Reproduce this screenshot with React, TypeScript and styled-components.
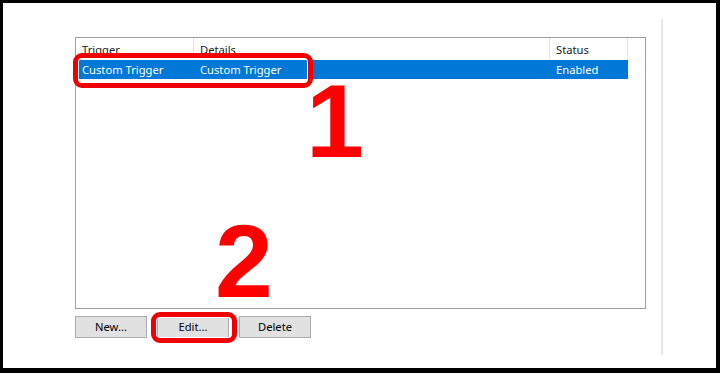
import React from "react";
import styled, { createGlobalStyle } from "styled-components";

const Global = createGlobalStyle`
  html, body { margin: 0; padding: 0; background: #000; }
  #root { width: 720px; height: 373px; }
  * { box-sizing: border-box; }
`;

const Frame = styled.div`
  position: relative;
  width: 720px;
  height: 373px;
  background: #fff;
  border-style: solid;
  border-color: #000;
  border-width: 3px 4px 5px 3px;
  display: flex;
  align-items: flex-start;
  font-family: "Noto Sans", "Open Sans", sans-serif;
  font-size: 11.2px;
  color: #000;
`;

const MainColumn = styled.div`
  margin: 34px 0 0 72px;
  width: 571px;
  display: flex;
  flex-direction: column;
`;

const RightRule = styled.div`
  margin: 16px 0 0 15px;
  width: 2px;
  height: 336px;
  background: #e6e6e6;
`;

const ListBox = styled.div`
  height: 272px;
  border: 1px solid #a0a0a0;
  background: #fff;
  display: flex;
  flex-direction: column;
`;

const Row = styled.div<{ $selected?: boolean; $header?: boolean }>`
  width: 552px;
  height: ${(p) => (p.$header ? "22px" : "19px")};
  display: grid;
  grid-template-columns: 118px 356px 78px;
  background: ${(p) => (p.$selected ? "#0078d7" : "transparent")};
  color: ${(p) => (p.$selected ? "#fff" : "#1a1a1a")};
`;

const Cell = styled.div<{ $header?: boolean }>`
  padding-left: 6px;
  display: flex;
  align-items: center;
  white-space: nowrap;
  line-height: 1;
  border-right: ${(p) => (p.$header ? "1px solid #e5e5e5" : "none")};
  padding-top: ${(p) => (p.$header ? "1px" : "0")};
`;

const ButtonRow = styled.div`
  margin-top: 7px;
  display: flex;
  gap: 10px;
`;

const Button = styled.button`
  width: 72px;
  height: 22px;
  padding: 0;
  background: #e1e1e1;
  border: 1px solid #adadad;
  font-family: "Noto Sans", "Open Sans", sans-serif;
  font-size: 11.2px;
  color: #000;
  line-height: 1;
`;

const Highlight = styled.div<{ $l: number; $t: number; $w: number; $h: number }>`
  position: absolute;
  left: ${(p) => p.$l}px;
  top: ${(p) => p.$t}px;
  width: ${(p) => p.$w}px;
  height: ${(p) => p.$h}px;
  border: 5px solid #f00000;
  border-radius: 9px;
  box-shadow: inset 0 0 0 1px #fff;
  pointer-events: none;
`;

const StepNumber = styled.div<{ $l: number; $t: number }>`
  position: absolute;
  left: ${(p) => p.$l}px;
  top: ${(p) => p.$t}px;
  font-family: "Liberation Sans", Arial, sans-serif;
  font-weight: bold;
  font-size: 104px;
  line-height: 1;
  color: #ff0000;
`;

const columns = ["Trigger", "Details", "Status"];
const rows = [["Custom Trigger", "Custom Trigger", "Enabled"]];

export default function App() {
  return (
    <>
      <Global />
      <Frame>
        <MainColumn>
          <ListBox>
            <Row $header>
              {columns.map((c) => (
                <Cell key={c} $header>
                  {c}
                </Cell>
              ))}
            </Row>
            {rows.map((r, i) => (
              <Row key={i} $selected>
                {r.map((c, j) => (
                  <Cell key={j}>{c}</Cell>
                ))}
              </Row>
            ))}
          </ListBox>
          <ButtonRow>
            <Button>New...</Button>
            <Button>Edit...</Button>
            <Button>Delete</Button>
          </ButtonRow>
        </MainColumn>
        <RightRule />
        <Highlight $l={70} $t={50} $w={240} $h={35} />
        <Highlight $l={148} $t={309} $w={86} $h={31} />
        <StepNumber $l={303} $t={66}>1</StepNumber>
        <StepNumber $l={212} $t={206}>2</StepNumber>
      </Frame>
    </>
  );
}
